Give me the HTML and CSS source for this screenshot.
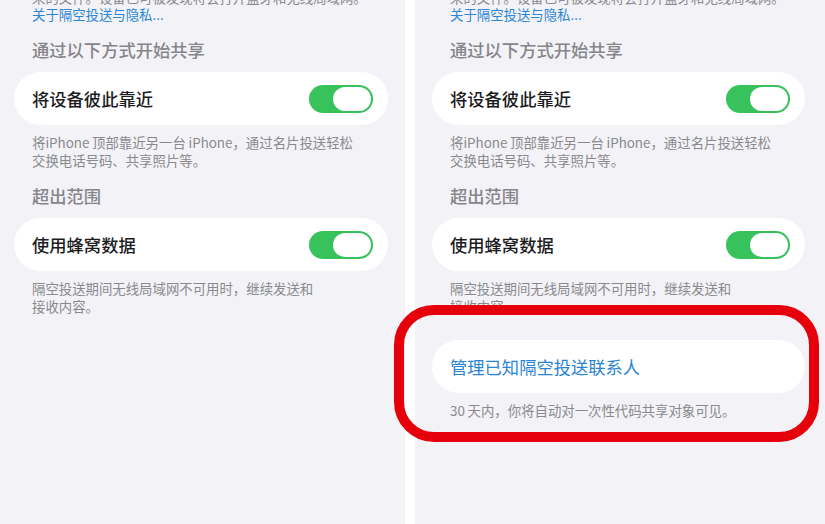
FILE: index.html
```html
<!DOCTYPE html>
<html lang="zh-CN">
<head>
  <meta charset="UTF-8" />
  <title>隔空投送</title>
  <link rel="stylesheet" href="styles.css">
</head>
<body>

  <div class="screens">
    <div class="panel panel-left">
      <p class="intro">来的文件。设备已可被发现将会打开蓝牙和无线局域网。<br><a class="link" href="#">关于隔空投送与隐私...</a></p>

      <h3 class="group-title">通过以下方式开始共享</h3>
      <div class="row">
        <span class="row-label">将设备彼此靠近</span>
        <span class="toggle on"></span>
      </div>
      <p class="note">将iPhone&thinsp;顶部靠近另一台&thinsp;iPhone，通过名片投送轻松<br>交换电话号码、共享照片等。</p>

      <h3 class="group-title">超出范围</h3>
      <div class="row">
        <span class="row-label">使用蜂窝数据</span>
        <span class="toggle on"></span>
      </div>
      <p class="note">隔空投送期间无线局域网不可用时，继续发送和<br>接收内容。</p>
    </div>

    <div class="divider"></div>

    <div class="panel panel-right">
      <p class="intro">来的文件。设备已可被发现将会打开蓝牙和无线局域网。<br><a class="link" href="#">关于隔空投送与隐私...</a></p>

      <h3 class="group-title">通过以下方式开始共享</h3>
      <div class="row">
        <span class="row-label">将设备彼此靠近</span>
        <span class="toggle on"></span>
      </div>
      <p class="note">将iPhone&thinsp;顶部靠近另一台&thinsp;iPhone，通过名片投送轻松<br>交换电话号码、共享照片等。</p>

      <h3 class="group-title">超出范围</h3>
      <div class="row">
        <span class="row-label">使用蜂窝数据</span>
        <span class="toggle on"></span>
      </div>
      <p class="note">隔空投送期间无线局域网不可用时，继续发送和<br>接收内容。</p>

      <div class="row row-action">
        <span class="row-label action">管理已知隔空投送联系人</span>
      </div>
      <p class="note">30&thinsp;天内，你将自动对一次性代码共享对象可见。</p>
    </div>

    <!-- annotation drawn over the screenshot -->
    <div class="highlight"></div>
  </div>

</body>
</html>
```

FILE: styles.css
```css
* {
  box-sizing: border-box;
}
body {
  margin: 0;
  background: #ffffff;
  font-family: "Noto Sans CJK SC", "Noto Sans", sans-serif;
  overflow: hidden;
}
.screens {
  position: relative;
  display: flex;
  width: 825px;
  height: 524px;
  overflow: hidden;
}
.panel {
  background: #f2f2f7;
  height: 524px;
  overflow: hidden;
}
.panel-left {
  width: 405px;
  padding: 0 17px 0 14px;
}
.panel-right {
  width: 410px;
  padding: 0 20px 0 17px;
}
.divider {
  width: 10px;
  background: #ffffff;
}
.intro {
  margin: -11px 0 0;
  padding-left: 18px;
  font-size: 13.4px;
  line-height: 17px;
  color: #8a8a8e;
  white-space: nowrap;
}
.link {
  color: #2c86d6;
  text-decoration: none;
}
.group-title {
  margin: 15px 0 10px;
  padding-left: 18px;
  font-size: 17.3px;
  line-height: 24px;
  font-weight: 500;
  color: #85858a;
}
.row {
  display: flex;
  align-items: center;
  justify-content: space-between;
  height: 53px;
  padding: 0 15px 0 18px;
  background: #ffffff;
  border-radius: 27px;
}
.row-label {
  font-size: 17.3px;
  font-weight: 500;
  color: #1c1c1e;
}
.row-label.action {
  color: #2a84d4;
  font-weight: 400;
}
.row-action {
  margin-top: 25px;
}
.toggle {
  position: relative;
  width: 64px;
  height: 28px;
  border-radius: 14px;
  background: #e5e5ea;
}
.toggle.on {
  background: #37c25c;
}
.toggle::after {
  content: "";
  position: absolute;
  top: 2px;
  right: 2px;
  width: 38px;
  height: 24px;
  border-radius: 12px;
  background: #ffffff;
}
.note {
  margin: 8px 0 13px;
  padding-left: 18px;
  font-size: 13.4px;
  line-height: 18px;
  color: #8a8a8e;
}
.highlight {
  position: absolute;
  left: 394px;
  top: 305px;
  width: 425px;
  height: 137px;
  border: 10px solid #e6000c;
  border-radius: 40px;
}
```
